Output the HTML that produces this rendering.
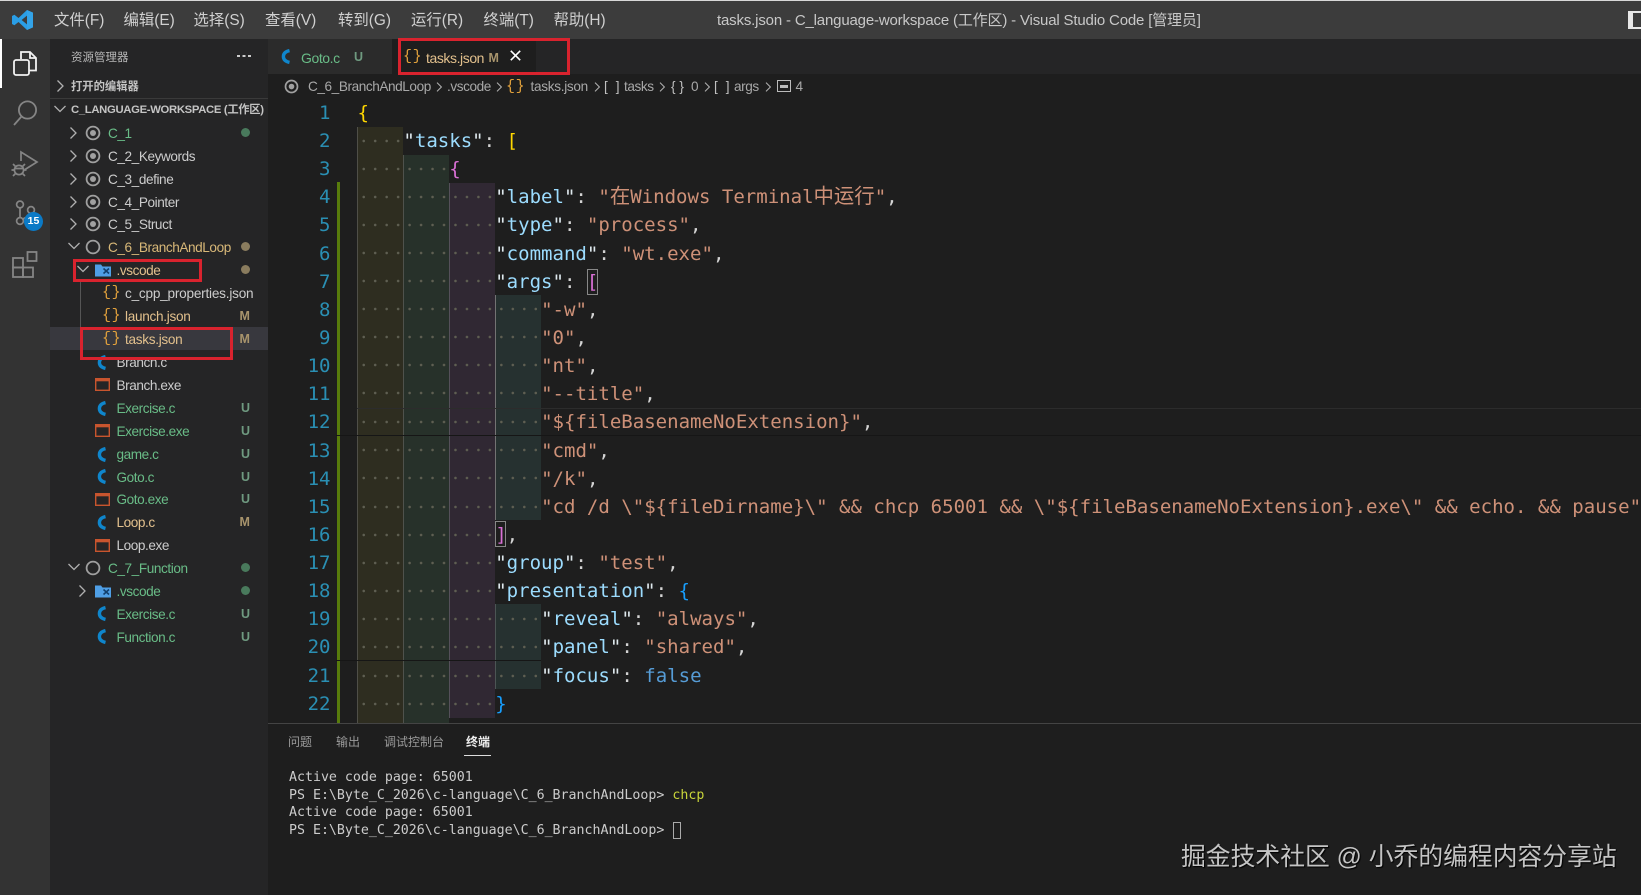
<!DOCTYPE html>
<html lang="zh">
<head>
<meta charset="utf-8">
<title>tasks.json - C_language-workspace</title>
<style>
html,body{margin:0;padding:0;width:1641px;height:895px;overflow:hidden;background:#1e1e1e}
body{position:relative;font-family:"Liberation Sans","Noto Sans CJK SC",sans-serif;color:#ccc}
.a,.a *{box-sizing:border-box}
.a{position:absolute}
svg{position:absolute;overflow:visible;fill:none}
.m{position:absolute;top:10px;font-size:15.4px;line-height:22px;color:#d0d0d0;white-space:nowrap}
.t{position:absolute;margin-top:1px;font-size:13.6px;line-height:22px;letter-spacing:-.42px;white-space:nowrap;color:#cccccc}
.g{color:#69bc87}.y{color:#d8b878}.l{color:#e2c08d}
.d{position:absolute;font-size:12.5px;line-height:22px;font-weight:bold;left:241px;white-space:nowrap}
.du{color:#6f9a80}.dm{color:#a8946c}
.dot{position:absolute;left:241px;width:9px;height:9px;border-radius:50%}
.b{position:absolute;font-family:"Liberation Mono",monospace;font-size:15px;line-height:22px;color:#e0a03c;letter-spacing:.6px;margin-left:-1px;white-space:nowrap}
.band{position:absolute}
.gd{position:absolute;width:1px}
.n{position:absolute;left:290px;width:40.5px;text-align:right;font-family:"DejaVu Sans Mono","Liberation Mono",monospace;font-size:19.05px;line-height:28px;color:#2a8fb3}
.c{position:absolute;font-family:"DejaVu Sans Mono","Liberation Mono",monospace;font-size:19.05px;line-height:28px;white-space:pre;color:#d4d4d4}
.c i{font-style:normal}
.k{color:#9cdcfe}.s{color:#ce9178}.q{color:#dfe9ee}
.cj{font-family:"Noto Sans CJK SC",sans-serif;font-size:20.4px}
.dt{position:absolute;left:357.5px;height:28px;background:radial-gradient(circle at 5.73px 50%,#5f5f52 1.1px,transparent 1.5px) 0 0/11.47px 100% repeat-x}
.bc{position:absolute;top:76px;font-size:13.6px;line-height:22px;letter-spacing:-.42px;color:#a8a8a8;white-space:nowrap}
.red{position:absolute;box-sizing:border-box;border:3px solid #d9232e}
.pt{position:absolute;top:733px;font-size:12px;line-height:18px;color:#9a9a9a;white-space:nowrap}
.tm{position:absolute;left:289px;font-family:"DejaVu Sans Mono","Liberation Mono",monospace;font-size:13.28px;line-height:18px;color:#cccccc;white-space:pre}
</style>
</head>
<body>
<svg width="0" height="0" style="position:absolute">
  <symbol id="cr" viewBox="0 0 10 14"><path d="M2.5 1.5 8 7 2.5 12.5" fill="none" stroke="#b0b0b0" stroke-width="1.3"/></symbol>
  <symbol id="cd" viewBox="0 0 14 10"><path d="M1.5 2 7 7.5 12.5 2" fill="none" stroke="#b0b0b0" stroke-width="1.3"/></symbol>
  <symbol id="tg" viewBox="0 0 16 16"><circle cx="8" cy="8" r="6.4" fill="none" stroke="#a0a0a0" stroke-width="1.8"/><circle cx="8" cy="8" r="3" fill="#a0a0a0"/></symbol>
  <symbol id="rg" viewBox="0 0 16 16"><circle cx="8" cy="8" r="6.4" fill="none" stroke="#a0a0a0" stroke-width="1.8"/></symbol>
  <symbol id="cc" viewBox="0 0 11 15"><path d="M8.5 1.6C4.6 2.5 2.4 4.6 2.4 7.5S4.6 12.5 8.5 13.4" fill="none" stroke="#0f86cc" stroke-width="3.4"/></symbol>
  <symbol id="ex" viewBox="0 0 15 13"><rect x=".7" y=".7" width="13.6" height="11.6" fill="none" stroke="#c8552e" stroke-width="1.4"/><rect x=".7" y=".7" width="13.6" height="2.6" fill="#c8552e"/></symbol>
  <symbol id="fo" viewBox="0 0 16 13"><path d="M0 1h6l1.5 2H16v10H0z" fill="#4f9fe6"/><path d="M8.5 5 14 10M14 5 8.5 10" stroke="#12406e" stroke-width="1.6" fill="none"/></symbol>
</svg>

<!-- title bar -->
<div class="a" style="left:0;top:0;width:1641px;height:39px;background:#3c3c3c"></div>
<div class="a" style="left:0;top:0;width:1641px;height:1px;background:#d8d8d8"></div>
<svg style="left:12px;top:10px" width="21" height="20" viewBox="0 0 21 20"><path d="M15 0 21 2.6V17.4L15 20 6.5 12 2.4 15.2 0 14V6L2.4 4.8 6.5 8zM15 5.6 9.6 10 15 14.4z" fill="#2a9ee6"/><path d="M15 0 21 2.6V17.4L15 20z" fill="#3aa6ea" opacity=".6"/></svg>
<div class="m" style="left:54px">文件(F)</div>
<div class="m" style="left:123.5px">编辑(E)</div>
<div class="m" style="left:193.5px">选择(S)</div>
<div class="m" style="left:265px">查看(V)</div>
<div class="m" style="left:338px">转到(G)</div>
<div class="m" style="left:411px">运行(R)</div>
<div class="m" style="left:483.5px">终端(T)</div>
<div class="m" style="left:553.5px">帮助(H)</div>
<div class="a" style="left:717px;top:10px;font-size:15px;line-height:22px;color:#c8c8c8;white-space:nowrap;letter-spacing:-.17px">tasks.json - C_language-workspace (工作区) - Visual Studio Code [管理员]</div>
<div class="a" style="left:1628px;top:11px;width:13px;height:18px;background:#e8e8e8;border:2px solid #e8e8e8;border-right:0"><div class="a" style="left:3px;top:0;width:8px;height:14px;background:#3c3c3c"></div></div>

<!-- activity bar -->
<div class="a" style="left:0;top:39px;width:50px;height:856px;background:#333333"></div>
<div class="a" style="left:0;top:39px;width:2px;height:49px;background:#fff"></div>
<svg style="left:12px;top:49px" width="26" height="28" viewBox="0 0 26 28" stroke="#f2f2f2" stroke-width="1.8"><path d="M9 10V3h9l6 6v12.5h-7"/><path d="M18 3v6h6"/><rect x="2" y="11" width="15" height="15" rx="2"/></svg>
<svg style="left:12px;top:100px" width="28" height="28" viewBox="0 0 28 28" stroke="#858585" stroke-width="1.8"><circle cx="15.5" cy="10" r="8.6"/><path d="M9.5 16.5 2 25"/></svg>
<svg style="left:10px;top:148px" width="30" height="30" viewBox="0 0 30 30" stroke="#858585" stroke-width="1.7"><path d="M11 13V4L27 14 15 21.5"/><circle cx="9" cy="22" r="4.6"/><path d="M5.5 18.5 3 16M12.5 18.5 15 16M4.4 22H1.5M13.6 22H16.5M5.5 25.5 3 28M12.5 25.5 15 28M4.5 20.5H13.5"/></svg>
<svg style="left:14px;top:198px" width="24" height="30" viewBox="0 0 24 30" stroke="#858585" stroke-width="1.7"><circle cx="6" cy="6.5" r="3.4"/><circle cx="6" cy="23" r="3.4"/><circle cx="17" cy="12" r="3.4"/><path d="M6 10V19.5M17 15.5C17 18 12 19 8.8 21"/></svg>
<div class="a" style="left:24px;top:212px;width:19px;height:19px;border-radius:50%;background:#0b7ac6;color:#fff;font-size:10.5px;font-weight:bold;line-height:19px;text-align:center">15</div>
<svg style="left:12px;top:250px" width="26" height="28" viewBox="0 0 26 28" stroke="#858585" stroke-width="1.8"><rect x="1" y="8" width="10" height="9.5"/><rect x="1" y="17.5" width="10" height="9.5"/><rect x="11" y="17.5" width="10" height="9.5"/><rect x="15.5" y="2" width="9" height="9"/></svg>

<!-- sidebar -->
<div class="a" style="left:50px;top:39px;width:218px;height:856px;background:#252526"></div>
<div class="a" style="left:71px;top:49px;font-size:11.5px;line-height:18px;color:#b8b8b8;white-space:nowrap">资源管理器</div>
<div class="a" style="left:237px;top:55px;width:3px;height:2px;background:#ccc;box-shadow:5.5px 0 #ccc,11px 0 #ccc"></div>
<svg style="left:55px;top:79px" width="10" height="14"><use href="#cr" width="10" height="14"/></svg>
<div class="a" style="left:71px;top:78px;font-size:11.3px;font-weight:bold;line-height:18px;color:#c4c4c4;white-space:nowrap">打开的编辑器</div>
<div class="a" style="left:50px;top:98px;width:218px;height:1px;background:#3a3a3a"></div>
<svg style="left:53px;top:104px" width="14" height="10"><use href="#cd" width="14" height="10"/></svg>
<div class="a" style="left:71px;top:101px;font-size:11.3px;font-weight:bold;line-height:18px;color:#c4c4c4;white-space:nowrap;letter-spacing:-.33px">C_LANGUAGE-WORKSPACE (工作区)</div>

<!-- selection + tree guide -->
<div class="a" style="left:50px;top:327px;width:218px;height:23px;background:#38383e"></div>
<div class="a" style="left:80px;top:282px;width:1px;height:45px;background:#555"></div>

<!-- root rows -->
<svg style="left:68px;top:126px" width="10" height="14"><use href="#cr" width="10" height="14"/></svg>
<svg style="left:85px;top:125px" width="16" height="16"><use href="#tg" width="16" height="16"/></svg>
<div class="t g" style="left:108px;top:122px">C_1</div><div class="dot" style="top:128px;background:#497a5c"></div>
<svg style="left:68px;top:149px" width="10" height="14"><use href="#cr" width="10" height="14"/></svg>
<svg style="left:85px;top:148px" width="16" height="16"><use href="#tg" width="16" height="16"/></svg>
<div class="t" style="left:108px;top:145px">C_2_Keywords</div>
<svg style="left:68px;top:172px" width="10" height="14"><use href="#cr" width="10" height="14"/></svg>
<svg style="left:85px;top:171px" width="16" height="16"><use href="#tg" width="16" height="16"/></svg>
<div class="t" style="left:108px;top:168px">C_3_define</div>
<svg style="left:68px;top:195px" width="10" height="14"><use href="#cr" width="10" height="14"/></svg>
<svg style="left:85px;top:194px" width="16" height="16"><use href="#tg" width="16" height="16"/></svg>
<div class="t" style="left:108px;top:191px">C_4_Pointer</div>
<svg style="left:68px;top:217px" width="10" height="14"><use href="#cr" width="10" height="14"/></svg>
<svg style="left:85px;top:216px" width="16" height="16"><use href="#tg" width="16" height="16"/></svg>
<div class="t" style="left:108px;top:213px">C_5_Struct</div>
<svg style="left:67px;top:241px" width="14" height="10"><use href="#cd" width="14" height="10"/></svg>
<svg style="left:85px;top:239px" width="16" height="16"><use href="#rg" width="16" height="16"/></svg>
<div class="t y" style="left:108px;top:236px">C_6_BranchAndLoop</div><div class="dot" style="top:242px;background:#8a7c5e"></div>

<svg style="left:76px;top:264px" width="14" height="10"><use href="#cd" width="14" height="10"/></svg>
<svg style="left:95px;top:263px" width="16" height="14"><use href="#fo" width="16" height="14"/></svg>
<div class="t l" style="left:116.5px;top:259px">.vscode</div><div class="dot" style="top:265px;background:#8a7c5e"></div>

<div class="b" style="left:103px;top:282px">{}</div>
<div class="t" style="left:125px;top:282px;letter-spacing:-.22px">c_cpp_properties.json</div>
<div class="b" style="left:103px;top:305px">{}</div>
<div class="t l" style="left:125px;top:305px;letter-spacing:-.3px">launch.json</div><div class="d dm" style="top:305px;left:239.5px">M</div>
<div class="b" style="left:103px;top:328px">{}</div>
<div class="t l" style="left:125px;top:328px;letter-spacing:-.3px">tasks.json</div><div class="d dm" style="top:328px;left:239.5px">M</div>

<svg style="left:97px;top:355px" width="11" height="15"><use href="#cc" width="11" height="15"/></svg>
<div class="t" style="left:116.5px;top:351px">Branch.c</div>
<svg style="left:95px;top:378px" width="15" height="13"><use href="#ex" width="15" height="13"/></svg>
<div class="t" style="left:116.5px;top:374px">Branch.exe</div>
<svg style="left:97px;top:401px" width="11" height="15"><use href="#cc" width="11" height="15"/></svg>
<div class="t g" style="left:116.5px;top:397px">Exercise.c</div><div class="d du" style="top:397px">U</div>
<svg style="left:95px;top:424px" width="15" height="13"><use href="#ex" width="15" height="13"/></svg>
<div class="t g" style="left:116.5px;top:420px">Exercise.exe</div><div class="d du" style="top:420px">U</div>
<svg style="left:97px;top:447px" width="11" height="15"><use href="#cc" width="11" height="15"/></svg>
<div class="t g" style="left:116.5px;top:443px">game.c</div><div class="d du" style="top:443px">U</div>
<svg style="left:97px;top:469px" width="11" height="15"><use href="#cc" width="11" height="15"/></svg>
<div class="t g" style="left:116.5px;top:466px">Goto.c</div><div class="d du" style="top:466px">U</div>
<svg style="left:95px;top:493px" width="15" height="13"><use href="#ex" width="15" height="13"/></svg>
<div class="t g" style="left:116.5px;top:488px">Goto.exe</div><div class="d du" style="top:488px">U</div>
<svg style="left:97px;top:515px" width="11" height="15"><use href="#cc" width="11" height="15"/></svg>
<div class="t l" style="left:116.5px;top:511px">Loop.c</div><div class="d dm" style="top:511px;left:239.5px">M</div>
<svg style="left:95px;top:539px" width="15" height="13"><use href="#ex" width="15" height="13"/></svg>
<div class="t" style="left:116.5px;top:534px">Loop.exe</div>

<svg style="left:67px;top:562px" width="14" height="10"><use href="#cd" width="14" height="10"/></svg>
<svg style="left:85px;top:560px" width="16" height="16"><use href="#rg" width="16" height="16"/></svg>
<div class="t g" style="left:108px;top:557px">C_7_Function</div><div class="dot" style="top:563px;background:#497a5c"></div>
<svg style="left:77px;top:584px" width="10" height="14"><use href="#cr" width="10" height="14"/></svg>
<svg style="left:95px;top:584px" width="16" height="14"><use href="#fo" width="16" height="14"/></svg>
<div class="t g" style="left:116.5px;top:580px">.vscode</div><div class="dot" style="top:586px;background:#497a5c"></div>
<svg style="left:97px;top:606px" width="11" height="15"><use href="#cc" width="11" height="15"/></svg>
<div class="t g" style="left:116.5px;top:603px">Exercise.c</div><div class="d du" style="top:603px">U</div>
<svg style="left:97px;top:629px" width="11" height="15"><use href="#cc" width="11" height="15"/></svg>
<div class="t g" style="left:116.5px;top:626px">Function.c</div><div class="d du" style="top:626px">U</div>

<!-- tabs -->
<div class="a" style="left:268px;top:39px;width:1373px;height:35px;background:#252526"></div>
<div class="a" style="left:268px;top:39px;width:124px;height:35px;background:#2b2b2b"></div>
<div class="a" style="left:392px;top:39px;width:144px;height:36px;background:#1e1e1e"></div>
<svg style="left:281px;top:49px" width="11" height="15"><use href="#cc" width="11" height="15"/></svg>
<div class="t g" style="left:301px;top:46px;font-size:14px">Goto.c</div>
<div class="d du" style="left:354px;top:46px">U</div>
<div class="b" style="left:404px;top:46px">{}</div>
<div class="t l" style="left:426px;top:46px;font-size:14px">tasks.json</div>
<div class="d dm" style="left:488.5px;top:47px">M</div>
<svg style="left:510px;top:50px" width="11" height="11" stroke="#fff" stroke-width="1.6"><path d="M.8.8 10.2 10.2M10.2.8.8 10.2"/></svg>

<!-- breadcrumbs -->
<svg style="left:284px;top:79px" width="15" height="15"><use href="#tg" width="15" height="15"/></svg>
<div class="bc" style="left:308px">C_6_BranchAndLoop</div>
<svg style="left:435px;top:81px" width="8" height="12"><use href="#cr" width="8" height="12"/></svg>
<div class="bc" style="left:447px">.vscode</div>
<svg style="left:495px;top:81px" width="8" height="12"><use href="#cr" width="8" height="12"/></svg>
<div class="b" style="left:507px;top:76px">{}</div>
<div class="bc" style="left:530.5px;letter-spacing:-.3px">tasks.json</div>
<svg style="left:593px;top:81px" width="8" height="12"><use href="#cr" width="8" height="12"/></svg>
<div class="bc" style="left:604px;letter-spacing:8px;color:#c0c0c0">[]</div>
<div class="bc" style="left:624px">tasks</div>
<svg style="left:658px;top:81px" width="8" height="12"><use href="#cr" width="8" height="12"/></svg>
<div class="bc" style="left:671px;letter-spacing:0;color:#c0c0c0">{ }</div>
<div class="bc" style="left:691px">0</div>
<svg style="left:703px;top:81px" width="8" height="12"><use href="#cr" width="8" height="12"/></svg>
<div class="bc" style="left:714px;letter-spacing:8px;color:#c0c0c0">[]</div>
<div class="bc" style="left:734px">args</div>
<svg style="left:764px;top:81px" width="8" height="12"><use href="#cr" width="8" height="12"/></svg>
<div class="a" style="left:777px;top:80px;width:14px;height:12px;border:1.5px solid #bbb;background:linear-gradient(#bbb,#bbb) 2px 4px/8px 3px no-repeat"></div>
<div class="bc" style="left:795.5px">4</div>

<!-- editor: bands -->
<div class="band" style="left:357.5px;top:127px;width:45.9px;height:596px;background:#2e2d20"></div>
<div class="band" style="left:403.4px;top:155px;width:45.9px;height:568px;background:#27312a"></div>
<div class="band" style="left:449.3px;top:183px;width:45.9px;height:535px;background:#302833"></div>
<div class="band" style="left:495.2px;top:295px;width:45.9px;height:225px;background:#263130"></div>
<div class="band" style="left:495.2px;top:604px;width:45.9px;height:85px;background:#263130"></div>
<div class="gd" style="left:357px;top:127px;height:596px;background:#4f4f48"></div>
<div class="gd" style="left:403px;top:155px;height:568px;background:#4f524c"></div>
<div class="gd" style="left:449px;top:183px;height:535px;background:#55505a"></div>
<div class="gd" style="left:495px;top:295px;height:225px;background:#737373"></div>
<div class="gd" style="left:495px;top:604px;height:85px;background:#4c5554"></div>
<div class="a" style="left:336.5px;top:182px;width:3px;height:541px;background:#587c0c"></div>

<!-- whitespace dots -->
<div class="dt" style="top:127px;width:46px"></div>
<div class="dt" style="top:155px;width:92px"></div>
<div class="dt" style="top:183px;width:138px"></div>
<div class="dt" style="top:211px;width:138px"></div>
<div class="dt" style="top:239px;width:138px"></div>
<div class="dt" style="top:267px;width:138px"></div>
<div class="dt" style="top:295px;width:183.5px"></div>
<div class="dt" style="top:323px;width:183.5px"></div>
<div class="dt" style="top:351px;width:183.5px"></div>
<div class="dt" style="top:379px;width:183.5px"></div>
<div class="dt" style="top:408px;width:183.5px"></div>
<div class="dt" style="top:436px;width:183.5px"></div>
<div class="dt" style="top:464px;width:183.5px"></div>
<div class="dt" style="top:492.5px;width:183.5px"></div>
<div class="dt" style="top:520.5px;width:138px"></div>
<div class="dt" style="top:548.5px;width:138px"></div>
<div class="dt" style="top:576.5px;width:138px"></div>
<div class="dt" style="top:604.5px;width:183.5px"></div>
<div class="dt" style="top:632.5px;width:183.5px"></div>
<div class="dt" style="top:661.5px;width:183.5px"></div>
<div class="dt" style="top:689.5px;width:138px"></div>

<!-- current line + seams -->
<div class="a" style="left:357px;top:408px;width:1284px;height:1px;background:#2c2c2c"></div>
<div class="a" style="left:336px;top:435px;width:1305px;height:1px;background:#161616"></div>
<div class="a" style="left:336px;top:660px;width:205px;height:1px;background:#161616"></div>

<!-- line numbers -->
<div class="n" style="top:99px">1</div>
<div class="n" style="top:127px">2</div>
<div class="n" style="top:155px">3</div>
<div class="n" style="top:183px">4</div>
<div class="n" style="top:211px">5</div>
<div class="n" style="top:239.5px">6</div>
<div class="n" style="top:267.5px">7</div>
<div class="n" style="top:295.5px">8</div>
<div class="n" style="top:323.5px">9</div>
<div class="n" style="top:351.5px">10</div>
<div class="n" style="top:379.5px">11</div>
<div class="n" style="top:408px">12</div>
<div class="n" style="top:437px">13</div>
<div class="n" style="top:465px">14</div>
<div class="n" style="top:492.5px">15</div>
<div class="n" style="top:520.5px">16</div>
<div class="n" style="top:548.5px">17</div>
<div class="n" style="top:576.5px">18</div>
<div class="n" style="top:604.5px">19</div>
<div class="n" style="top:632.5px">20</div>
<div class="n" style="top:661.5px">21</div>
<div class="n" style="top:689.5px">22</div>

<!-- code -->
<div class="c" style="left:357.5px;top:99px"><i style="color:#ffd700">{</i></div>
<div class="c" style="left:403.4px;top:127px"><i class="q">"</i><i class="k">tasks</i><i class="q">"</i>: <i style="color:#ffd700">[</i></div>
<div class="c" style="left:449.3px;top:155px"><i style="color:#da70d6">{</i></div>
<div class="c" style="left:495.2px;top:180px"><i class="q">"</i><i class="k">label</i><i class="q">"</i>: <i class="s">"<i class="cj">在</i>Windows Terminal<i class="cj">中运行</i>"</i>,</div>
<div class="c" style="left:495.2px;top:211px"><i class="q">"</i><i class="k">type</i><i class="q">"</i>: <i class="s">"process"</i>,</div>
<div class="c" style="left:495.2px;top:239.5px"><i class="q">"</i><i class="k">command</i><i class="q">"</i>: <i class="s">"wt.exe"</i>,</div>
<div class="c" style="left:495.2px;top:267.5px"><i class="q">"</i><i class="k">args</i><i class="q">"</i>: <i style="color:#da70d6">[</i></div>
<div class="a" style="left:587px;top:269px;width:11px;height:26px;border:1px solid #888"></div>
<div class="c s" style="left:541.1px;top:295.5px">"-w"<i style="color:#d4d4d4">,</i></div>
<div class="c s" style="left:541.1px;top:323.5px">"0"<i style="color:#d4d4d4">,</i></div>
<div class="c s" style="left:541.1px;top:351.5px">"nt"<i style="color:#d4d4d4">,</i></div>
<div class="c s" style="left:541.1px;top:379.5px">"--title"<i style="color:#d4d4d4">,</i></div>
<div class="c s" style="left:541.1px;top:408px">"${fileBasenameNoExtension}"<i style="color:#d4d4d4">,</i></div>
<div class="c s" style="left:541.1px;top:437px">"cmd"<i style="color:#d4d4d4">,</i></div>
<div class="c s" style="left:541.1px;top:465px">"/k"<i style="color:#d4d4d4">,</i></div>
<div class="c s" style="left:541.1px;top:492.5px">"cd /d \"${fileDirname}\" &amp;&amp; chcp 65001 &amp;&amp; \"${fileBasenameNoExtension}.exe\" &amp;&amp; echo. &amp;&amp; pause"<i style="color:#d4d4d4">,</i></div>
<div class="c" style="left:495.2px;top:520.5px"><i style="color:#da70d6">]</i>,</div>
<div class="a" style="left:495px;top:521px;width:11px;height:26px;border:1px solid #888"></div>
<div class="c" style="left:495.2px;top:548.5px"><i class="q">"</i><i class="k">group</i><i class="q">"</i>: <i class="s">"test"</i>,</div>
<div class="c" style="left:495.2px;top:576.5px"><i class="q">"</i><i class="k">presentation</i><i class="q">"</i>: <i style="color:#179fff">{</i></div>
<div class="c" style="left:541.1px;top:604.5px"><i class="q">"</i><i class="k">reveal</i><i class="q">"</i>: <i class="s">"always"</i>,</div>
<div class="c" style="left:541.1px;top:632.5px"><i class="q">"</i><i class="k">panel</i><i class="q">"</i>: <i class="s">"shared"</i>,</div>
<div class="c" style="left:541.1px;top:661.5px"><i class="q">"</i><i class="k">focus</i><i class="q">"</i>: <i style="color:#569cd6">false</i></div>
<div class="c" style="left:495.2px;top:689.5px"><i style="color:#179fff">}</i></div>

<!-- panel -->
<div class="a" style="left:268px;top:723px;width:1373px;height:172px;background:#1e1e1e;border-top:1px solid #444"></div>
<div class="pt" style="left:288px">问题</div>
<div class="pt" style="left:336px">输出</div>
<div class="pt" style="left:384px">调试控制台</div>
<div class="pt" style="left:466px;color:#eee;font-weight:bold">终端</div>
<div class="a" style="left:464px;top:755px;width:27px;height:1px;background:#ddd"></div>
<div class="tm" style="top:768.5px">Active code page: 65001</div>
<div class="tm" style="top:786.5px">PS E:\Byte_C_2026\c-language\C_6_BranchAndLoop&gt; <span style="color:#c8d43a">chcp</span></div>
<div class="tm" style="top:804px">Active code page: 65001</div>
<div class="tm" style="top:822px">PS E:\Byte_C_2026\c-language\C_6_BranchAndLoop&gt; </div>
<div class="a" style="left:673px;top:822px;width:8px;height:17px;border:1.5px solid #aaa"></div>

<!-- red annotation boxes -->
<div class="red" style="left:398px;top:38px;width:172px;height:37px"></div>
<div class="red" style="left:73px;top:259px;width:129px;height:23px"></div>
<div class="red" style="left:80px;top:327px;width:153px;height:33px"></div>

<!-- watermark -->
<div class="a" style="left:1181px;top:842px;font-size:24.8px;line-height:32px;color:#c4c4c4;white-space:nowrap;text-shadow:1px 1px 1px #000;font-family:'Liberation Sans','Noto Sans CJK SC',sans-serif">掘金技术社区 @ 小乔的编程内容分享站</div>
</body>
</html>
